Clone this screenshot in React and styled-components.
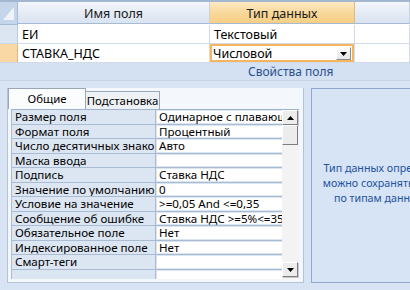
import React from "react";
import styled, { createGlobalStyle, css } from "styled-components";

const Global = createGlobalStyle`
  html, body { margin: 0; padding: 0; }
  body {
    width: 410px;
    height: 290px;
    overflow: hidden;
    background: #d8e4f3;
    font-family: "Noto Sans", "Open Sans", sans-serif;
  }
`;

const Root = styled.div`
  width: 410px;
  height: 290px;
  overflow: hidden;
  display: flex;
  flex-direction: column;
`;

const TopGrid = styled.div`
  display: grid;
  grid-template-columns: 18px 192px 145px 1fr;
  border-top: 2px solid #a3b7d0;
  background: #fff;
`;

const HeaderCell = styled.div`
  height: 22px;
  border-bottom: 1px solid #a6bad4;
  border-right: 1px solid ${(p) => (p.$active ? "#e7b968" : "#c3d2e5")};
  background: ${(p) =>
    p.$active
      ? "linear-gradient(#fce9c3, #f8d798 55%, #f6cf86)"
      : "linear-gradient(#f3f6fb, #e4ebf5 55%, #d9e3f1)"};
  font-size: 12.5px;
  color: #1a1a1a;
  display: flex;
  align-items: center;
  justify-content: center;
  padding-top: 1px;
  box-sizing: border-box;
`;

const Corner = styled.div`
  height: 22px;
  border-bottom: 1px solid #a6bad4;
  border-right: 1px solid #a6bad4;
  background: #c5d6ec;
  display: flex;
  align-items: center;
  justify-content: center;
`;

const Selector = styled.div`
  height: 18px;
  border-bottom: 1px solid #c9d6e7;
  border-right: 1px solid ${(p) => (p.$current ? "#e9b76c" : "#b9cbe2")};
  background: ${(p) => (p.$current ? "#f9d8a6" : "#dce6f3")};
`;

const Cell = styled.div`
  position: relative;
  border-bottom: 1px solid #d2dce9;
  border-right: 1px solid #d2dce9;
  background: #fff;
  font-size: 12.5px;
  color: #000;
  padding-left: 4px;
  display: flex;
  align-items: center;
  box-sizing: border-box;
  height: 19px;
  ${(p) =>
    p.$focused &&
    css`
      box-shadow: inset 0 0 0 2px #f7b560;
      padding-left: 3px;
    `}
`;

const DropButton = styled.div`
  position: absolute;
  right: 3px;
  top: 3px;
  width: 15px;
  height: 13px;
  box-sizing: border-box;
  background: linear-gradient(#fbfbfb, #e6e6e6);
  border: 1px solid #fff;
  border-right-color: #8a8a8a;
  border-bottom-color: #8a8a8a;
  display: flex;
  align-items: center;
  justify-content: center;
`;

const SectionBar = styled.div`
  height: 18px;
  background: #d3e1f2;
  border-bottom: 1px solid #c4d4e8;
  color: #2c4f8e;
  font-size: 12px;
  display: flex;
  align-items: center;
  padding-left: 248px;
  box-sizing: border-box;
`;

const Lower = styled.div`
  flex: 1;
  display: flex;
  gap: 7px;
  padding: 7px 0 0 7px;
  background: #d8e4f3;
`;

const PropsPanel = styled.div`
  width: 297px;
  height: 195px;
  flex: none;
  box-sizing: border-box;
  border: 1px solid #b2c3d8;
  border-top: none;
  background: #f4f7fb;
  display: flex;
  flex-direction: column;
`;

const Tabs = styled.div`
  display: flex;
  align-items: flex-end;
  height: 21px;
`;

const Tab = styled.div`
  box-sizing: border-box;
  font-size: 11.4px;
  color: #000;
  display: flex;
  align-items: center;
  justify-content: center;
  border: 1px solid #9aa7b6;
  border-bottom: none;
  white-space: nowrap;
  ${(p) =>
    p.$active
      ? css`
          width: 78px;
          height: 21px;
          background: #fbfcfe;
          padding-bottom: 2px;
        `
      : css`
          width: 74px;
          height: 18px;
          background: #eef1f5;
          border-left: none;
        `}
`;

const PropsBody = styled.div`
  margin-left: 3px;
  width: 288px;
  height: 169px;
  display: flex;
  overflow: hidden;
  border-top: 1px solid #9fb2cb;
`;

const PropsTable = styled.div`
  width: 271px;
  display: grid;
  grid-template-columns: 143px 127px;
  grid-auto-rows: 13.5px;
  gap: 1px;
  background: #a9bcd3;
  padding: 0 1px;
  align-content: start;
  overflow: hidden;
`;

const Label = styled.div`
  background: #dce6f2;
  font-size: 11.6px;
  color: #000;
  padding-left: 3px;
  line-height: 13.5px;
  white-space: nowrap;
  overflow: hidden;
`;

const Value = styled.div`
  background: #fff;
  box-shadow: inset 0 0 0 1px #dbe5f1;
  font-size: 11.6px;
  color: #000;
  padding-left: 3px;
  line-height: 13.5px;
  white-space: nowrap;
  overflow: hidden;
`;

const ScrollBar = styled.div`
  width: 17px;
  display: flex;
  flex-direction: column;
  background: #f3f3f3;
`;

const ScrollButton = styled.div`
  width: 16px;
  height: 15px;
  box-sizing: border-box;
  background: #ececec;
  border: 1px solid #fff;
  border-right-color: #7e7e7e;
  border-bottom-color: #7e7e7e;
  box-shadow: 1px 1px 0 #c8c8c8;
  display: flex;
  align-items: center;
  justify-content: center;
  margin-top: ${(p) => (p.$bottom ? "auto" : "0")};
  margin-bottom: ${(p) => (p.$bottom ? "2px" : "0")};
`;

const Thumb = styled.div`
  width: 16px;
  height: 20px;
  box-sizing: border-box;
  background: #ececec;
  border: 1px solid #fff;
  border-right-color: #7e7e7e;
  border-bottom-color: #7e7e7e;
`;

const HelpPanel = styled.div`
  width: 250px;
  height: 195px;
  flex: none;
  box-sizing: border-box;
  border: 1px solid #8fa8c9;
  background: #d6e4f5;
  color: #2451a0;
  font-size: 10.7px;
  line-height: 15px;
  text-align: center;
  white-space: nowrap;
  display: flex;
  align-items: center;
  justify-content: center;
  padding-bottom: 4px;
`;

const Arrow = ({ up }) => (
  <svg width="7" height="4" viewBox="0 0 7 4">
    <polygon points={up ? "0,4 7,4 3.5,0" : "0,0 7,0 3.5,4"} fill="#000" />
  </svg>
);

const rows = [
  ["Размер поля", "Одинарное с плавающей точкой"],
  ["Формат поля", "Процентный"],
  ["Число десятичных знаков", "Авто"],
  ["Маска ввода", ""],
  ["Подпись", "Ставка НДС"],
  ["Значение по умолчанию", "0"],
  ["Условие на значение", ">=0,05 And <=0,35"],
  ["Сообщение об ошибке", "Ставка НДС >=5%<=35%"],
  ["Обязательное поле", "Нет"],
  ["Индексированное поле", "Нет"],
  ["Смарт-теги", ""],
  ["", ""],
];

export default function App() {
  return (
    <Root>
      <Global />
      <TopGrid>
        <Corner>
          <svg width="17" height="22" viewBox="0 0 17 22">
            <polygon points="3,18 14,18 14,5" fill="#eef3f9" />
          </svg>
        </Corner>
        <HeaderCell>Имя поля</HeaderCell>
        <HeaderCell $active>Тип данных</HeaderCell>
        <HeaderCell />

        <Selector />
        <Cell>ЕИ</Cell>
        <Cell>Текстовый</Cell>
        <Cell />

        <Selector $current />
        <Cell>СТАВКА_НДС</Cell>
        <Cell $focused>
          Числовой
          <DropButton>
            <Arrow />
          </DropButton>
        </Cell>
        <Cell />
      </TopGrid>
      <SectionBar>Свойства поля</SectionBar>
      <Lower>
        <PropsPanel>
          <Tabs>
            <Tab $active>Общие</Tab>
            <Tab>Подстановка</Tab>
          </Tabs>
          <PropsBody>
            <PropsTable>
              {rows.map(([l, v], i) => (
                <React.Fragment key={i}>
                  <Label>{l}</Label>
                  <Value>{v}</Value>
                </React.Fragment>
              ))}
            </PropsTable>
            <ScrollBar>
              <ScrollButton>
                <Arrow up />
              </ScrollButton>
              <Thumb />
              <ScrollButton $bottom>
                <Arrow />
              </ScrollButton>
            </ScrollBar>
          </PropsBody>
        </PropsPanel>
        <HelpPanel>
          <div>
            Тип данных определяет значения, которые
            <br />
            можно сохранять в этом поле. Для справки
            <br />
            по типам данных нажмите клавишу F1.
          </div>
        </HelpPanel>
      </Lower>
    </Root>
  );
}
